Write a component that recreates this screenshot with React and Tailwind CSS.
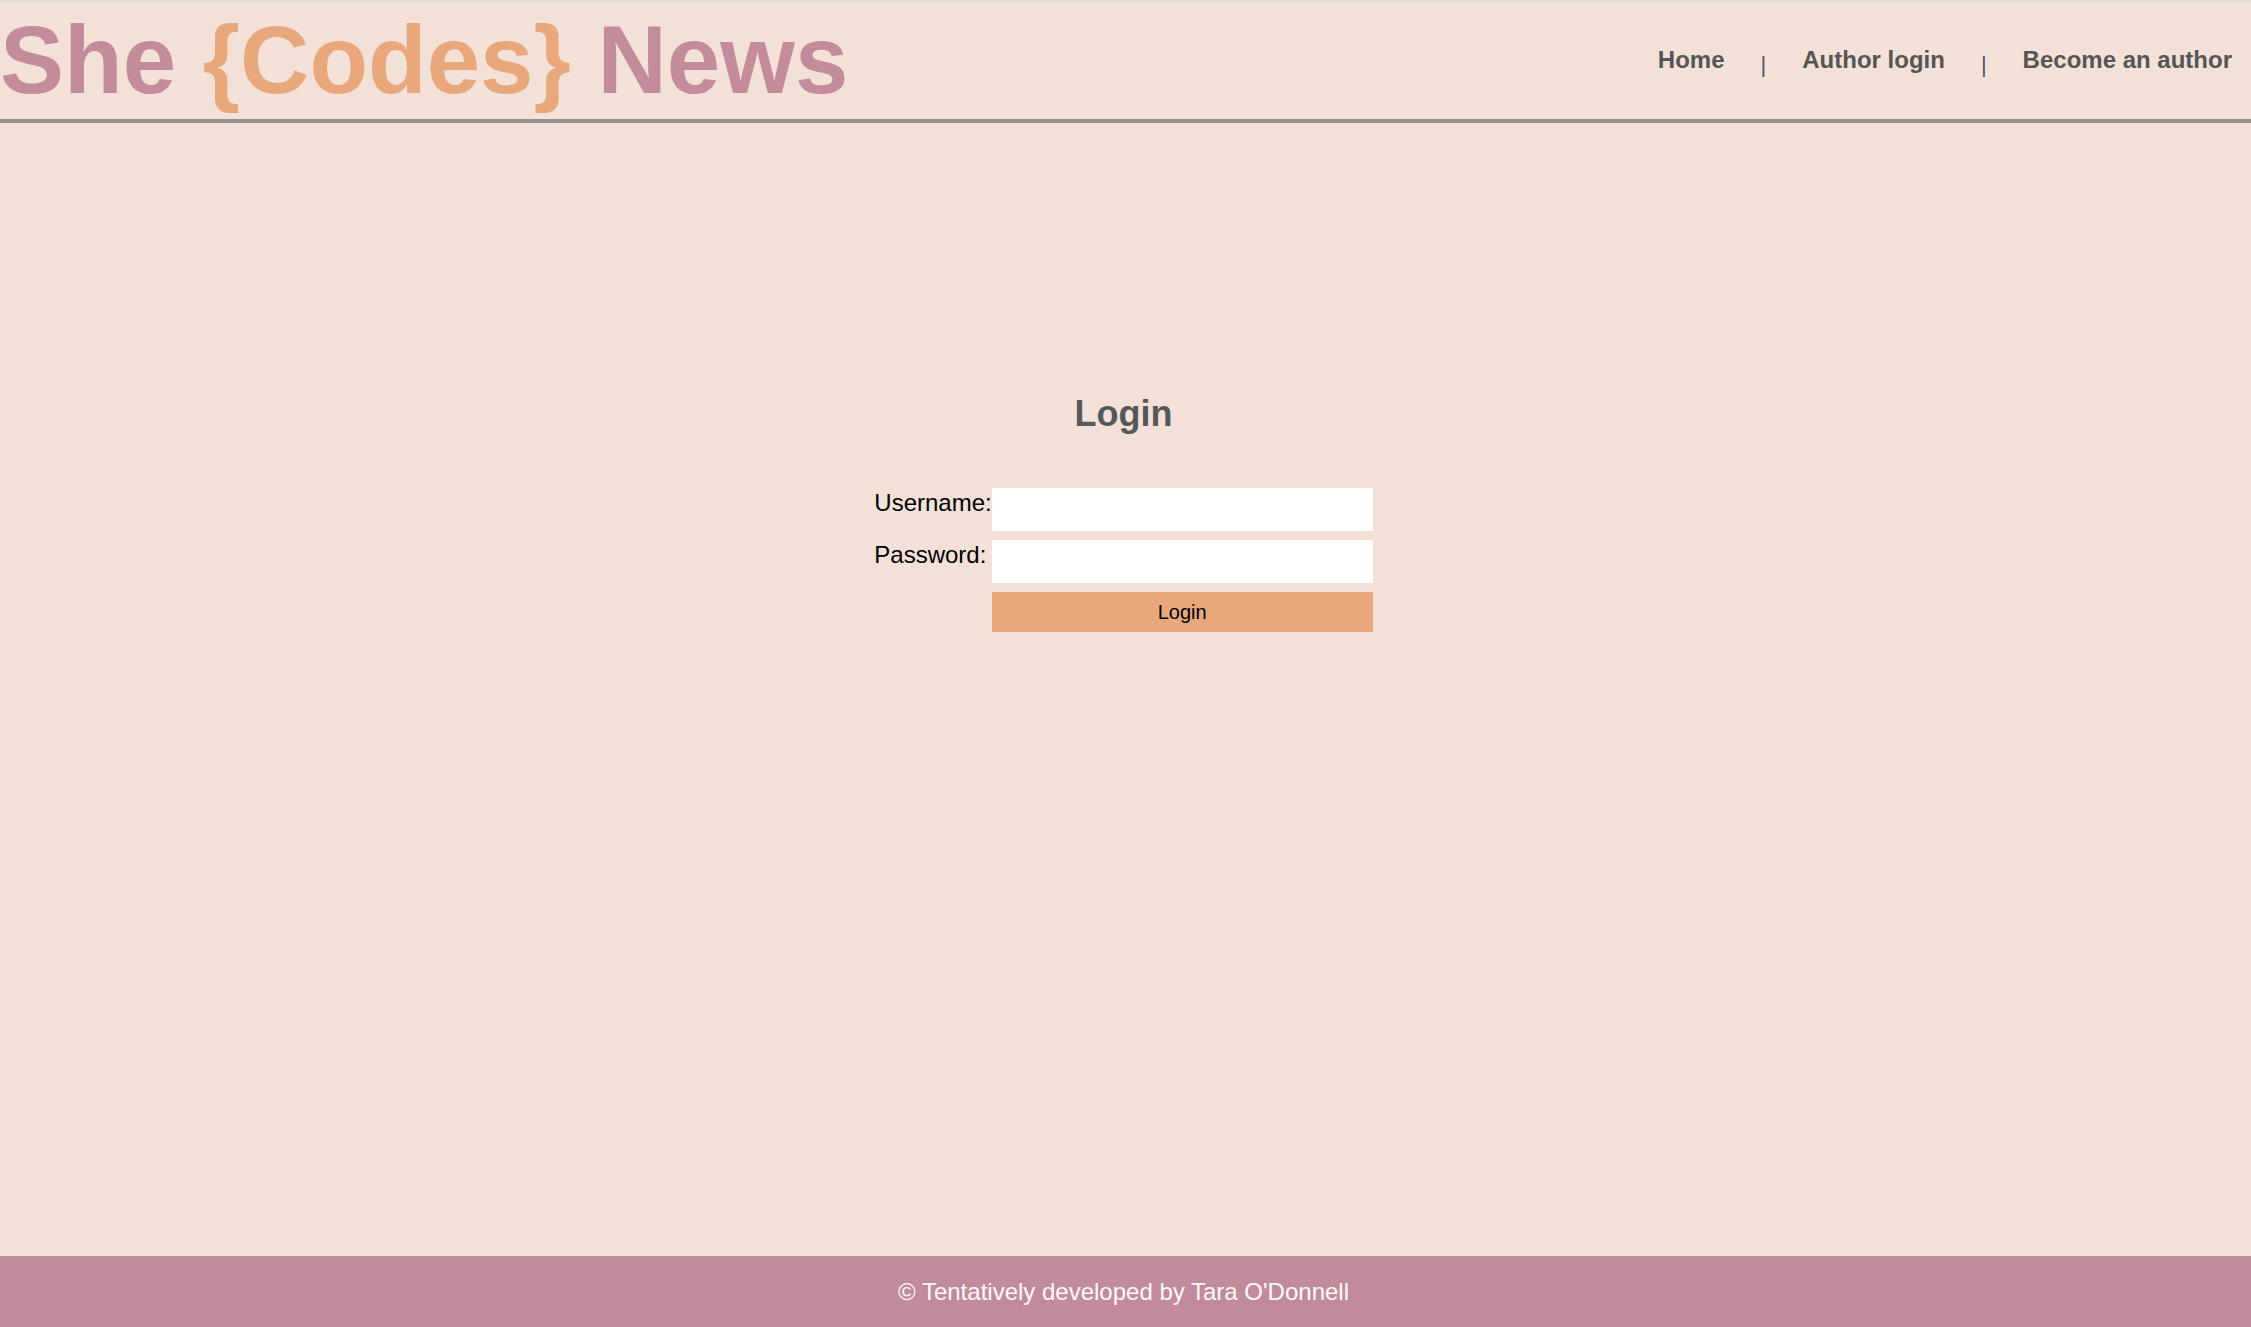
export default function App() {
  const font = { fontFamily: '"Liberation Sans", Arial, Helvetica, sans-serif' };
  return (
    <div className="min-h-screen flex flex-col bg-[#f3e1d8] font-['Liberation_Sans',Arial,sans-serif]" style={font}>
      <div className="h-[2px] bg-[#dedcdb]" />
      <header className="h-[121px] flex justify-between border-b-4 border-[#989190]">
        <h1 className="self-start mt-[4px] text-[96px] leading-[107px] font-bold text-[#c48b9b] whitespace-nowrap">
          She <span className="text-[#e8a87b]">{'{Codes}'}</span> News
        </h1>
        <nav className="self-start mt-[44px] flex items-start pr-[19px] text-[24px] leading-[27px] font-bold text-[#555555] whitespace-nowrap">
          <a href="#" className="block">Home</a>
          <span className="block mx-[36px] mt-[6px] text-[22px] leading-[25px] font-normal text-[#4f5170]">|</span>
          <a href="#" className="block">Author login</a>
          <span className="block mx-[36px] mt-[6px] text-[22px] leading-[25px] font-normal text-[#4f5170]">|</span>
          <a href="#" className="block">Become an author</a>
        </nav>
      </header>
      <main className="flex-1 flex flex-col items-center pt-[270px] pr-[4px]">
        <h2 className="text-[36px] leading-[41px] font-bold text-[#555858]">Login</h2>
        <form className="mt-[54px] grid grid-cols-[auto_381px] gap-y-[9px] items-start text-[24px] leading-[29px] text-black" onSubmit={(e) => e.preventDefault()}>
          <label htmlFor="username" className="block">Username:</label>
          <input id="username" type="text" className="h-[43px] bg-white border-0 outline-none px-2 text-[20px]" />
          <label htmlFor="password" className="block">Password:</label>
          <input id="password" type="password" className="h-[43px] bg-white border-0 outline-none px-2 text-[20px]" />
          <button type="submit" className="col-start-2 h-[40px] bg-[#e8a87c] text-[20px] leading-[23px] text-black">Login</button>
        </form>
      </main>
      <footer className="h-[71px] flex items-center justify-center bg-[#c28b9b] pr-[4px]">
        <p className="text-[24px] leading-[27px] text-[#fffafa]">© Tentatively developed by Tara O'Donnell</p>
      </footer>
    </div>
  );
}
